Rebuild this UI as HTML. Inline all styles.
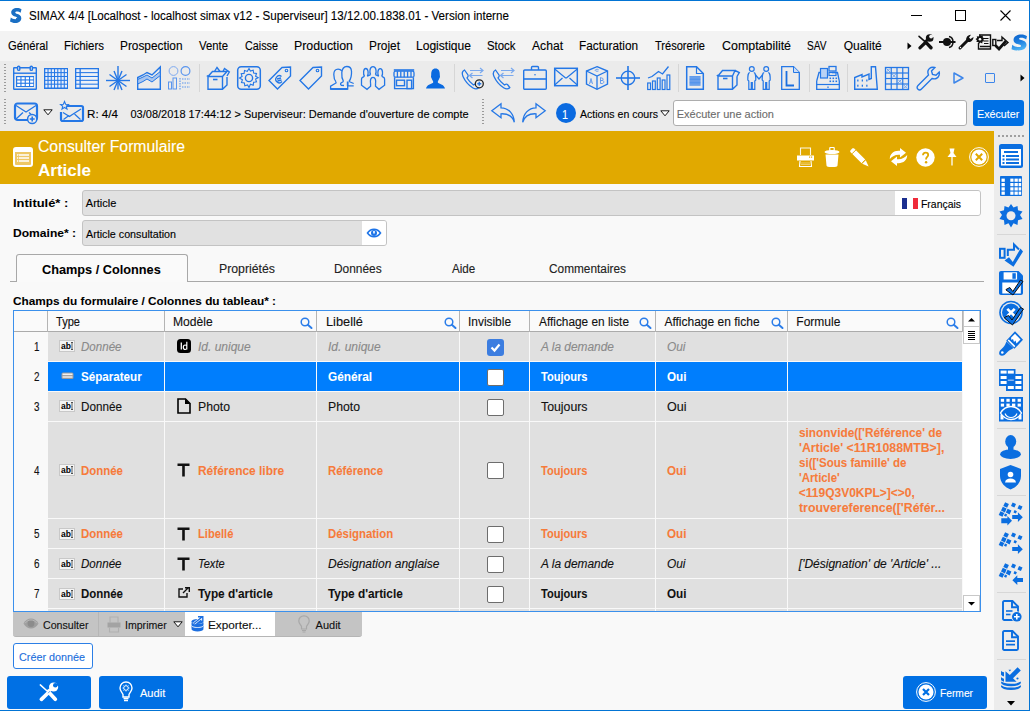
<!DOCTYPE html>
<html><head><meta charset="utf-8">
<style>
html,body{margin:0;padding:0;}
body{width:1030px;height:711px;position:relative;overflow:hidden;background:#f9f9f9;font-family:"Liberation Sans",sans-serif;color:#000;}
.t{position:absolute;white-space:nowrap;transform-origin:0 0;-webkit-text-stroke:0.12px currentColor;}
.b{position:absolute;box-sizing:border-box;}
svg{position:absolute;overflow:visible;}
</style></head><body>
<div class="b" style="left:0;top:0;width:1030px;height:31px;background:#fff"></div>
<div class="b" style="left:0;top:31px;width:1030px;height:30px;background:#f3f3f3"></div>
<div class="b" style="left:0;top:61px;width:1030px;height:70px;background:#ebebeb"></div>
<div class="b" style="left:0;top:131px;width:994px;height:53px;background:#e1a900"></div>
<div class="b" style="left:994px;top:131px;width:35px;height:580px;background:#ececec"></div>
<div class="t" style="left:29px;top:9.84px;font-size:12px;line-height:12px;transform:scaleX(0.967);">SIMAX 4/4 [Localhost - localhost simax v12 - Superviseur] 13/12.00.1838.01 - Version interne</div>
<div class="b" style="left:911px;top:15px;width:11px;height:1px;background:#000"></div>
<div class="b" style="left:955px;top:10px;width:11px;height:11px;border:1px solid #000"></div>
<svg style="left:1000px;top:10px" width="11" height="11"><path d="M0.5 0.5L10.5 10.5M10.5 0.5L0.5 10.5" stroke="#000" stroke-width="1.1"/></svg>
<div class="t" style="left:8.2px;top:39.84px;font-size:12px;line-height:12px;transform:scaleX(0.937);">Général</div>
<div class="t" style="left:63.7px;top:39.84px;font-size:12px;line-height:12px;transform:scaleX(0.952);">Fichiers</div>
<div class="t" style="left:119.7px;top:39.84px;font-size:12px;line-height:12px;transform:scaleX(0.986);">Prospection</div>
<div class="t" style="left:198.7px;top:39.84px;font-size:12px;line-height:12px;transform:scaleX(0.945);">Vente</div>
<div class="t" style="left:244.7px;top:39.84px;font-size:12px;line-height:12px;transform:scaleX(0.900);">Caisse</div>
<div class="t" style="left:293.7px;top:39.84px;font-size:12px;line-height:12px;transform:scaleX(1.028);">Production</div>
<div class="t" style="left:368.7px;top:39.84px;font-size:12px;line-height:12px;transform:scaleX(0.989);">Projet</div>
<div class="t" style="left:415.7px;top:39.84px;font-size:12px;line-height:12px;transform:scaleX(1.005);">Logistique</div>
<div class="t" style="left:486.7px;top:39.84px;font-size:12px;line-height:12px;transform:scaleX(0.950);">Stock</div>
<div class="t" style="left:531.7px;top:39.84px;font-size:12px;line-height:12px;transform:scaleX(1.010);">Achat</div>
<div class="t" style="left:578.7px;top:39.84px;font-size:12px;line-height:12px;transform:scaleX(0.983);">Facturation</div>
<div class="t" style="left:654.7px;top:39.84px;font-size:12px;line-height:12px;transform:scaleX(0.922);">Trésorerie</div>
<div class="t" style="left:721.7px;top:39.84px;font-size:12px;line-height:12px;transform:scaleX(1.035);">Comptabilité</div>
<div class="t" style="left:806.7px;top:39.84px;font-size:12px;line-height:12px;transform:scaleX(0.843);">SAV</div>
<div class="t" style="left:843.7px;top:39.84px;font-size:12px;line-height:12px;">Qualité</div>
<div class="t" style="left:87px;top:109.29px;font-size:11px;line-height:11px;transform:scaleX(1.056);">R: 4/4</div>
<div class="t" style="left:130.5px;top:109.29px;font-size:11px;line-height:11px;">03/08/2018 17:44:12 &gt; Superviseur: Demande d&#x27;ouverture de compte</div>
<div class="t" style="left:580px;top:109.29px;font-size:11px;line-height:11px;transform:scaleX(0.959);">Actions en cours</div>
<div class="b" style="left:673px;top:100px;width:294px;height:26px;background:#fff;border:1px solid #adadad;border-radius:3px"></div>
<div class="t" style="left:676.7px;top:109.29px;font-size:11px;line-height:11px;color:#6d6d6d;">Exécuter une action</div>
<div class="b" style="left:973px;top:100px;width:51px;height:26px;background:#0070e4;border-radius:3px"></div>
<div class="t" style="left:976.7px;top:109.29px;font-size:11px;line-height:11px;color:#fff;transform:scaleX(0.972);">Exécuter</div>
<div class="t" style="left:38.3px;top:138.86px;font-size:16px;line-height:16px;color:#fff;transform:scaleX(0.984);">Consulter Formulaire</div>
<div class="t" style="left:38.3px;top:162.76px;font-size:16px;line-height:16px;font-weight:bold;-webkit-text-stroke:0.05px currentColor;color:#fff;transform:scaleX(1.064);">Article</div>
<div class="t" style="left:13px;top:198.29px;font-size:11px;line-height:11px;font-weight:bold;-webkit-text-stroke:0.05px currentColor;transform:scaleX(1.175);">Intitulé* :</div>
<div class="b" style="left:82px;top:190px;width:899px;height:26px;background:#e1e1e1;border:1px solid #c3c3c3;border-radius:3px"></div>
<div class="b" style="left:895px;top:191px;width:85px;height:24px;background:#fff;border-radius:0 2px 2px 0"></div>
<div class="t" style="left:85.8px;top:198.29px;font-size:11px;line-height:11px;">Article</div>
<div class="b" style="left:902px;top:198px;width:5px;height:11px;background:#1b2f8f"></div>
<div class="b" style="left:907px;top:198px;width:6px;height:11px;background:#fff"></div>
<div class="b" style="left:913px;top:198px;width:5px;height:11px;background:#ef2b3b"></div>
<div class="t" style="left:921.4px;top:199.29px;font-size:11px;line-height:11px;transform:scaleX(0.948);">Français</div>
<div class="t" style="left:13px;top:228.29px;font-size:11px;line-height:11px;font-weight:bold;-webkit-text-stroke:0.05px currentColor;transform:scaleX(1.097);">Domaine* :</div>
<div class="b" style="left:82px;top:220px;width:305px;height:26px;background:#e1e1e1;border:1px solid #c3c3c3;border-radius:3px"></div>
<div class="b" style="left:362px;top:221px;width:24px;height:24px;background:#fff;border-radius:0 2px 2px 0"></div>
<div class="t" style="left:85.8px;top:229.29px;font-size:11px;line-height:11px;transform:scaleX(0.975);">Article consultation</div>
<div class="b" style="left:10px;top:281px;width:974px;height:1px;background:#a8a8a8"></div>
<div class="b" style="left:16px;top:254px;width:172px;height:28px;background:#fafafa;border:1px solid #a8a8a8;border-bottom:none;border-radius:3px 3px 0 0"></div>
<div class="t" style="left:42.3px;top:264.44px;font-size:12px;line-height:12px;font-weight:bold;-webkit-text-stroke:0.05px currentColor;transform:scaleX(1.060);">Champs / Colonnes</div>
<div class="t" style="left:219px;top:263.04px;font-size:12px;line-height:12px;color:#222;transform:scaleX(1.024);">Propriétés</div>
<div class="t" style="left:334.3px;top:263.04px;font-size:12px;line-height:12px;color:#222;transform:scaleX(0.993);">Données</div>
<div class="t" style="left:452.3px;top:263.04px;font-size:12px;line-height:12px;color:#222;transform:scaleX(0.970);">Aide</div>
<div class="t" style="left:549px;top:263.04px;font-size:12px;line-height:12px;color:#222;transform:scaleX(0.987);">Commentaires</div>
<div class="t" style="left:13.1px;top:295.89px;font-size:11px;line-height:11px;font-weight:bold;-webkit-text-stroke:0.05px currentColor;transform:scaleX(1.073);">Champs du formulaire / Colonnes du tableau* :</div>
<div class="b" style="left:4px;top:64px;width:2px;height:28px;background:repeating-linear-gradient(#9a9a9a 0 1px, transparent 1px 3px)"></div>
<div class="b" style="left:4px;top:99px;width:2px;height:27px;background:repeating-linear-gradient(#9a9a9a 0 1px, transparent 1px 3px)"></div>
<div class="b" style="left:482px;top:99px;width:2px;height:27px;background:repeating-linear-gradient(#9a9a9a 0 1px, transparent 1px 3px)"></div>
<div class="b" style="left:199px;top:64px;width:1px;height:28px;background:#d6d6d6"></div>
<div class="b" style="left:454px;top:64px;width:1px;height:28px;background:#d6d6d6"></div>
<div class="b" style="left:678px;top:64px;width:1px;height:28px;background:#d6d6d6"></div>
<div class="b" style="left:809px;top:64px;width:1px;height:28px;background:#d6d6d6"></div>
<div class="b" style="left:847px;top:64px;width:1px;height:28px;background:#d6d6d6"></div>
<svg style="left:13px;top:66px" width="24" height="24" viewBox="0 0 24 24" fill="none" stroke="#2477e6" stroke-width="1.4"><rect x="0.7" y="1.8" width="22.6" height="21.5" rx="0.5"/><line x1="0.7" y1="7.2" x2="23.3" y2="7.2"/><rect x="4.6" y="0.2" width="2.2" height="4.2" rx="1" fill="#ebebeb"/><rect x="17.2" y="0.2" width="2.2" height="4.2" rx="1" fill="#ebebeb"/><rect x="3" y="10" width="18" height="11" fill="#2477e6" stroke="none"/><rect x="4.2" y="11.2" width="3.2" height="2.2" fill="#fff" stroke="none"/><rect x="4.2" y="14.5" width="3.2" height="2.2" fill="#fff" stroke="none"/><rect x="4.2" y="17.8" width="3.2" height="2.2" fill="#fff" stroke="none"/><rect x="8.5" y="11.2" width="3.2" height="2.2" fill="#fff" stroke="none"/><rect x="8.5" y="14.5" width="3.2" height="2.2" fill="#fff" stroke="none"/><rect x="8.5" y="17.8" width="3.2" height="2.2" fill="#fff" stroke="none"/><rect x="12.8" y="11.2" width="3.2" height="2.2" fill="#fff" stroke="none"/><rect x="12.8" y="14.5" width="3.2" height="2.2" fill="#fff" stroke="none"/><rect x="12.8" y="17.8" width="3.2" height="2.2" fill="#fff" stroke="none"/><rect x="17.1" y="11.2" width="3.2" height="2.2" fill="#fff" stroke="none"/><rect x="17.1" y="14.5" width="3.2" height="2.2" fill="#fff" stroke="none"/><rect x="17.1" y="17.8" width="3.2" height="2.2" fill="#fff" stroke="none"/></svg>
<svg style="left:44px;top:66px" width="24" height="24" viewBox="0 0 24 24" fill="none" stroke="#2477e6" stroke-width="1.4"><rect x="0" y="2" width="24" height="21" fill="#2477e6" stroke="none"/><rect x="1.3" y="3.3" width="2.2" height="2.8" fill="#e8eefa" stroke="none"/><rect x="1.3" y="7.1499999999999995" width="2.2" height="2.8" fill="#e8eefa" stroke="none"/><rect x="1.3" y="11.0" width="2.2" height="2.8" fill="#e8eefa" stroke="none"/><rect x="1.3" y="14.849999999999998" width="2.2" height="2.8" fill="#e8eefa" stroke="none"/><rect x="1.3" y="18.7" width="2.2" height="2.8" fill="#e8eefa" stroke="none"/><rect x="4.55" y="3.3" width="2.2" height="2.8" fill="#e8eefa" stroke="none"/><rect x="4.55" y="7.1499999999999995" width="2.2" height="2.8" fill="#e8eefa" stroke="none"/><rect x="4.55" y="11.0" width="2.2" height="2.8" fill="#e8eefa" stroke="none"/><rect x="4.55" y="14.849999999999998" width="2.2" height="2.8" fill="#e8eefa" stroke="none"/><rect x="4.55" y="18.7" width="2.2" height="2.8" fill="#e8eefa" stroke="none"/><rect x="7.8" y="3.3" width="2.2" height="2.8" fill="#e8eefa" stroke="none"/><rect x="7.8" y="7.1499999999999995" width="2.2" height="2.8" fill="#e8eefa" stroke="none"/><rect x="7.8" y="11.0" width="2.2" height="2.8" fill="#e8eefa" stroke="none"/><rect x="7.8" y="14.849999999999998" width="2.2" height="2.8" fill="#e8eefa" stroke="none"/><rect x="7.8" y="18.7" width="2.2" height="2.8" fill="#e8eefa" stroke="none"/><rect x="11.05" y="3.3" width="2.2" height="2.8" fill="#e8eefa" stroke="none"/><rect x="11.05" y="7.1499999999999995" width="2.2" height="2.8" fill="#e8eefa" stroke="none"/><rect x="11.05" y="11.0" width="2.2" height="2.8" fill="#e8eefa" stroke="none"/><rect x="11.05" y="14.849999999999998" width="2.2" height="2.8" fill="#e8eefa" stroke="none"/><rect x="11.05" y="18.7" width="2.2" height="2.8" fill="#e8eefa" stroke="none"/><rect x="14.3" y="3.3" width="2.2" height="2.8" fill="#e8eefa" stroke="none"/><rect x="14.3" y="7.1499999999999995" width="2.2" height="2.8" fill="#e8eefa" stroke="none"/><rect x="14.3" y="11.0" width="2.2" height="2.8" fill="#e8eefa" stroke="none"/><rect x="14.3" y="14.849999999999998" width="2.2" height="2.8" fill="#e8eefa" stroke="none"/><rect x="14.3" y="18.7" width="2.2" height="2.8" fill="#e8eefa" stroke="none"/><rect x="17.55" y="3.3" width="2.2" height="2.8" fill="#e8eefa" stroke="none"/><rect x="17.55" y="7.1499999999999995" width="2.2" height="2.8" fill="#e8eefa" stroke="none"/><rect x="17.55" y="11.0" width="2.2" height="2.8" fill="#e8eefa" stroke="none"/><rect x="17.55" y="14.849999999999998" width="2.2" height="2.8" fill="#e8eefa" stroke="none"/><rect x="17.55" y="18.7" width="2.2" height="2.8" fill="#e8eefa" stroke="none"/><rect x="20.8" y="3.3" width="2.2" height="2.8" fill="#e8eefa" stroke="none"/><rect x="20.8" y="7.1499999999999995" width="2.2" height="2.8" fill="#e8eefa" stroke="none"/><rect x="20.8" y="11.0" width="2.2" height="2.8" fill="#e8eefa" stroke="none"/><rect x="20.8" y="14.849999999999998" width="2.2" height="2.8" fill="#e8eefa" stroke="none"/><rect x="20.8" y="18.7" width="2.2" height="2.8" fill="#e8eefa" stroke="none"/></svg>
<svg style="left:75px;top:66px" width="24" height="24" viewBox="0 0 24 24" fill="none" stroke="#2477e6" stroke-width="1.4"><rect x="0" y="2" width="24" height="21" fill="#2477e6" stroke="none"/><rect x="1.3" y="3.3" width="3.2" height="2.8" fill="#e8eefa" stroke="none"/><rect x="1.3" y="7.1499999999999995" width="3.2" height="2.8" fill="#e8eefa" stroke="none"/><rect x="1.3" y="11.0" width="3.2" height="2.8" fill="#e8eefa" stroke="none"/><rect x="1.3" y="14.849999999999998" width="3.2" height="2.8" fill="#e8eefa" stroke="none"/><rect x="1.3" y="18.7" width="3.2" height="2.8" fill="#e8eefa" stroke="none"/><rect x="5.8" y="3.3" width="16.9" height="2.8" fill="#eef1f6" stroke="none"/><rect x="5.8" y="7.15" width="16.9" height="2.8" fill="#eef1f6" stroke="none"/><rect x="5.8" y="11.0" width="16.9" height="2.8" fill="#eef1f6" stroke="none"/><rect x="5.8" y="14.850000000000001" width="16.9" height="2.8" fill="#eef1f6" stroke="none"/><rect x="5.8" y="18.7" width="16.9" height="2.8" fill="#eef1f6" stroke="none"/></svg>
<svg style="left:106px;top:66px" width="24" height="24" viewBox="0 0 24 24" fill="none" stroke="#2477e6" stroke-width="1.4"><line x1="12" y1="0" x2="12" y2="23.5"/><line x1="0" y1="14.5" x2="24" y2="14.5"/><line x1="3.5" y1="8.5" x2="20.5" y2="20.5"/><line x1="20.5" y1="8.5" x2="3.5" y2="20.5"/><line x1="8" y1="5" x2="16" y2="24"/><line x1="16" y1="5" x2="8" y2="24"/><circle cx="12" cy="14.5" r="1.3" fill="#2477e6"/></svg>
<svg style="left:137px;top:66px" width="24" height="24" viewBox="0 0 24 24" fill="none" stroke="#2477e6" stroke-width="1.4"><path d="M0.7 23.3V11.5L6 9L10 6.5L15 9L23.3 1V23.3Z"/><path d="M0.7 13.5L6 11L10 9L15 12L23.3 5.5V9.5L15 16L10 13L6 15.5L0.7 18Z" fill="#a9c6ef" stroke-width="1"/></svg>
<svg style="left:168px;top:66px" width="24" height="24" viewBox="0 0 24 24" fill="none" stroke="#2477e6" stroke-width="1.4"><circle cx="5.5" cy="5" r="4.4" stroke="#7eaaf0" stroke-width="1"/><circle cx="17.5" cy="5" r="4.4" stroke="#5a95ee" stroke-width="1.2"/><rect x="0.5" y="16" width="3" height="7" stroke="#5a95ee" stroke-width="1"/><rect x="5" y="12" width="3.5" height="11" stroke="#5a95ee" stroke-width="1"/><path d="M12 12V23.5M14 13h8M14 17h8M14 21h8" stroke="#5a95ee" stroke-width="1.1" stroke-dasharray="1.5 1"/></svg>
<svg style="left:206px;top:66px" width="24" height="24" viewBox="0 0 24 24" fill="none" stroke="#2477e6" stroke-width="1.4"><path d="M2 10.5V23.3H16.5L21 19V11M2 10.5H16.5V23.3M2 10.5L6.5 5.5H21L16.5 10.5" /><path d="M8.5 5.5L11 1.5L14 5.5M17 5.5L18.5 2.5L23.3 6L21 10" /><line x1="7" y1="13.5" x2="11.5" y2="13.5" stroke-width="1.6"/><path d="M0.8 10.5L2 9.5" /></svg>
<svg style="left:237px;top:66px" width="24" height="24" viewBox="0 0 24 24" fill="none" stroke="#2477e6" stroke-width="1.4"><rect x="0.7" y="0.7" width="22.6" height="22.6" rx="3.5" stroke-width="1.5"/><path d="M12 2.5l1.4 2.6 2.8-.9.4 2.9 2.9.4-.9 2.8 2.6 1.4-2.6 1.4.9 2.8-2.9.4-.4 2.9-2.8-.9L12 21.5l-1.4-2.6-2.8.9-.4-2.9-2.9-.4.9-2.8L2.5 12l2.6-1.4-.9-2.8 2.9-.4.4-2.9 2.8.9Z" stroke-width="1.1"/><circle cx="12" cy="12" r="3.6" stroke-width="1.4"/></svg>
<svg style="left:268px;top:66px" width="24" height="24" viewBox="0 0 24 24" fill="none" stroke="#2477e6" stroke-width="1.4"><path d="M22.5 1V10L9.5 23L1 14.5L14 1.5Z" stroke-width="1.4"/><circle cx="18.5" cy="4.5" r="1.3" stroke-width="1.1"/><path d="M13.5 10.5a3.5 3.5 0 1 0 0.5 5M9 13l4-1M9.5 15l4-1" stroke-width="1.3"/></svg>
<svg style="left:299px;top:66px" width="24" height="24" viewBox="0 0 24 24" fill="none" stroke="#2477e6" stroke-width="1.4"><path d="M22.5 1V10L9.5 23L1 14.5L14 1.5Z" stroke-width="1.4"/><circle cx="18.5" cy="4.5" r="1.3" stroke-width="1.1"/></svg>
<svg style="left:330px;top:66px" width="24" height="24" viewBox="0 0 24 24" fill="none" stroke="#2477e6" stroke-width="1.4"><path d="M6 15.9C4.5 14 3.8 11 3.8 8.4C3.8 5 5.5 3.1 8.1 3.1C9.8 3.1 11 3.8 11.8 5" stroke-width="1.3"/><path d="M6 15.9V17L0.6 20.2V23H17.7V20" stroke-width="1.3"/><path d="M0.6 23H17.7" stroke-width="1.8"/><path d="M13.5 15.5C12 13 11.6 9 11.8 6.6C12.2 2.2 14 0.5 16.8 0.5C19.6 0.5 21.3 2.2 21.5 5.3C21.7 9 20.8 13 19 15.5" stroke-width="1.3"/><path d="M13.5 15.5L11 17C10.3 17.8 10.5 18.8 11.5 19.3L14 19.5M19 15.5L23.7 17.5M17.7 19.8H23.7" stroke-width="1.3"/><path d="M17.7 15.5V20" stroke-width="1.8"/></svg>
<svg style="left:361px;top:66px" width="24" height="24" viewBox="0 0 24 24" fill="none" stroke="#2477e6" stroke-width="1.4"><path d="M3.5 10.2C2.2 8.5 2 2.5 4.8 2.5C7.6 2.5 7.6 8.5 6.3 10.2" stroke-width="1.3"/><path d="M9.6 8.6C8.4 6.5 8.5 0.6 12 0.6C15.5 0.6 15.6 6.5 14.4 8.6" stroke-width="1.3"/><path d="M17.7 10.2C16.4 8.5 16.4 2.7 19.2 2.7C22 2.7 22 8.5 20.7 10.2" stroke-width="1.3"/><path d="M3.5 10.2L1.2 11.6C0.6 12 0.5 12.8 0.5 13.6V19.2L6 23.3L9.6 20.2V17.8" stroke-width="1.3"/><path d="M20.7 10.2L23 11.6C23.6 12 23.6 12.8 23.6 13.6V19.2L18 23.3L14.5 20.2V17.8" stroke-width="1.3"/><path d="M9.6 17.8C9 14.5 9.6 11.3 12 11.3C14.4 11.3 15.1 14.5 14.5 17.8" stroke-width="1.3"/><path d="M6.3 10.2L9.6 8.6M14.4 8.6L17.7 10.2" stroke-width="1.3"/></svg>
<svg style="left:392px;top:66px" width="24" height="24" viewBox="0 0 24 24" fill="none" stroke="#2477e6" stroke-width="1.4"><path d="M1.8 4H22.2" stroke-width="1.6"/><rect x="2" y="5.2" width="20" height="6" rx="1.5" stroke-width="1.3"/><path d="M5.4 5.2V11.2M8.8 5.2V11.2M12.2 5.2V11.2M15.6 5.2V11.2M19 5.2V11.2" stroke-width="1.3"/><path d="M2.6 11.2V22.6H21.4V11.2" stroke-width="1.4"/><rect x="4.5" y="14.2" width="8" height="5.5" stroke-width="1.4"/><rect x="15" y="14.2" width="4.6" height="8.4" stroke-width="1.4"/></svg>
<svg style="left:426px;top:67.5px" width="19" height="21" viewBox="0 0 20 22"><path d="M10 0.5C6.8 0.5 5.5 3 5.5 6.5C5.5 8.5 5 9 5.5 10C6 11 6.5 12.5 7.5 14V15.5C5 17 1 17.5 0 21.5H20C19 17.5 15 17 12.5 15.5V14C13.5 12.5 14 11 14.5 10C15 9 14.5 8.5 14.5 6.5C14.5 3 13.2 0.5 10 0.5Z" fill="#0a6ae0"/></svg>
<svg style="left:461px;top:66px" width="24" height="24" viewBox="0 0 24 24" fill="none" stroke="#2477e6" stroke-width="1.4"><path d="M3.5 4C1.5 5 0.5 7 2 10.5C4 15 8 19.5 12 22C14.5 23.5 16.5 23 17.8 21.5L15.5 18.5C14.5 17.8 13.5 18.3 12.5 19C10.5 17.5 7.5 14.5 6 12C7 11 7.5 10 7 9Z" stroke-width="1.3"/><path d="M9 4.5H22M19 2L22 4.5L19 7M21.5 9.5H8.5M11.5 7L8.5 9.5L11.5 12" stroke="#7aa9ee" stroke-width="1.2"/><circle cx="18.3" cy="17.8" r="4" stroke="#222" stroke-width="1.3" fill="#ebebeb"/><path d="M18.3 15.8V19.8M16.3 17.8H20.3" stroke-width="1.5"/></svg>
<svg style="left:492px;top:66px" width="24" height="24" viewBox="0 0 24 24" fill="none" stroke="#2477e6" stroke-width="1.4"><path d="M3.5 4C1.5 5 0.5 7 2 10.5C4 15 8 19.5 12 22C14.5 23.5 16.5 23 17.8 21.5L15.5 18.5C14.5 17.8 13.5 18.3 12.5 19C10.5 17.5 7.5 14.5 6 12C7 11 7.5 10 7 9Z" stroke-width="1.3"/><path d="M9 4.5H22M19 2L22 4.5L19 7M21.5 9.5H8.5M11.5 7L8.5 9.5L11.5 12" stroke="#7aa9ee" stroke-width="1.2"/></svg>
<svg style="left:523px;top:66px" width="24" height="24" viewBox="0 0 24 24" fill="none" stroke="#2477e6" stroke-width="1.4"><rect x="0.7" y="4" width="22.6" height="19.3" rx="1"/><path d="M8.5 4V1.5C8.5 0.9 9 0.5 9.5 0.5H14.5C15 0.5 15.5 0.9 15.5 1.5V4"/><line x1="0.7" y1="13" x2="23.3" y2="13" stroke-width="1.6"/><circle cx="12" cy="8.8" r="0.8" fill="#2477e6" stroke="none"/></svg>
<svg style="left:554px;top:66px" width="24" height="24" viewBox="0 0 24 24" fill="none" stroke="#2477e6" stroke-width="1.4"><rect x="0.7" y="2.3" width="22.6" height="17.4" stroke-width="1.5"/><path d="M0.7 3L11 11.5C11.6 12 12.4 12 13 11.5L23.3 3M0.7 19L8.5 12M23.3 19L15.5 12" stroke-width="1.2"/></svg>
<svg style="left:585px;top:66px" width="24" height="24" viewBox="0 0 24 24" fill="none" stroke="#2477e6" stroke-width="1.4"><path d="M12 0.7L22.5 5V18L12 23.3L1.5 18V5Z" stroke-width="1.4"/><path d="M1.5 5L12 10L22.5 5M12 10V23.3" stroke-width="1.3"/><path d="M4.5 18L6 12.5L7.5 18M5 16h2" stroke="#5d97ec" stroke-width="0.9"/><path d="M15.5 11.5v6h1.7c1 0 1.6-.6 1.6-1.6 0-.9-.6-1.4-1.6-1.4h-1.7 1.4c.8 0 1.3-.5 1.3-1.3 0-.7-.5-1.1-1.3-1.1Z" stroke="#5d97ec" stroke-width="0.9"/><path d="M13.5 3.5a2 1 0 1 0 0 1.5" stroke="#5d97ec" stroke-width="0.9"/></svg>
<svg style="left:616px;top:66px" width="24" height="24" viewBox="0 0 24 24" fill="none" stroke="#2477e6" stroke-width="1.4"><circle cx="12" cy="12" r="6.8" stroke-width="1.3"/><line x1="12" y1="0" x2="12" y2="24" stroke-width="1.6"/><line x1="0" y1="12" x2="24" y2="12" stroke-width="1.6"/></svg>
<svg style="left:647px;top:66px" width="24" height="24" viewBox="0 0 24 24" fill="none" stroke="#2477e6" stroke-width="1.4"><rect x="0.7" y="17" width="2.8" height="6.5" stroke-width="1.2"/><rect x="5.5" y="15" width="2.8" height="8.5" stroke-width="1.2"/><rect x="10.3" y="12" width="2.8" height="11.5" stroke-width="1.2"/><rect x="15.2" y="14" width="2.8" height="9.5" stroke-width="1.2"/><rect x="20" y="9" width="2.8" height="14.5" stroke-width="1.2"/><path d="M1 12L5 10.5L11.5 5.5L15.5 8L21.5 0.5" stroke-width="1.3"/></svg>
<svg style="left:686px;top:66px" width="18" height="24" viewBox="0 0 18 24" fill="none" stroke="#2477e6" stroke-width="1.4"><path d="M0.7 0.7H10.5L17.3 7.5V23.3H0.7Z" stroke-width="1.5"/><path d="M10.5 0.7V7.5H17.3" stroke-width="1.2"/><rect x="3.5" y="10" width="11" height="9.5" fill="#8fb6f0" stroke="none"/><line x1="3.5" y1="10.8" x2="14.5" y2="10.8" stroke="#2477e6" stroke-width="0.6"/><line x1="3.5" y1="12.200000000000001" x2="14.5" y2="12.200000000000001" stroke="#2477e6" stroke-width="0.6"/><line x1="3.5" y1="13.600000000000001" x2="14.5" y2="13.600000000000001" stroke="#2477e6" stroke-width="0.6"/><line x1="3.5" y1="15.0" x2="14.5" y2="15.0" stroke="#2477e6" stroke-width="0.6"/><line x1="3.5" y1="16.4" x2="14.5" y2="16.4" stroke="#2477e6" stroke-width="0.6"/><line x1="3.5" y1="17.8" x2="14.5" y2="17.8" stroke="#2477e6" stroke-width="0.6"/><line x1="3.5" y1="19.2" x2="14.5" y2="19.2" stroke="#2477e6" stroke-width="0.6"/></svg>
<svg style="left:716px;top:66px" width="24" height="24" viewBox="0 0 24 24" fill="none" stroke="#2477e6" stroke-width="1.4"><path d="M2 10V23.3H16.5L21 19V10.5M2 10H16.5V23.3M2 10L6.5 4.5H19L16.5 10M19 4.5L23.3 6.5L21 10.5" /><line x1="7" y1="12.5" x2="11.5" y2="12.5" stroke-width="1.6"/><path d="M0.8 10L2 9" /></svg>
<svg style="left:747px;top:66px" width="24" height="24" viewBox="0 0 24 24" fill="none" stroke="#2477e6" stroke-width="1.4"><circle cx="4.8" cy="3" r="2.4" stroke-width="1.2"/><path d="M2.8 6.5C0.7999999999999998 7 0.7999999999999998 9 0.7999999999999998 14L1.7999999999999998 15V23.3H4.3V16M6.8 6.5C8.8 7 8.8 9 8.8 14L7.8 15V23.3H5.3V16" stroke-width="1.2"/><circle cx="19.2" cy="3" r="2.4" stroke-width="1.2"/><path d="M17.2 6.5C15.2 7 15.2 9 15.2 14L16.2 15V23.3H18.7V16M21.2 6.5C23.2 7 23.2 9 23.2 14L22.2 15V23.3H19.7V16" stroke-width="1.2"/><path d="M8.5 9L12 13L15.5 9" stroke-width="1.3"/></svg>
<svg style="left:781px;top:66px" width="19" height="24" viewBox="0 0 19 24" fill="none" stroke="#2477e6" stroke-width="1.4"><path d="M0.7 0.7H12.5L18.3 6.5V23.3H0.7Z" stroke-width="1.3"/><path d="M12.5 0.7V6.5H18.3" stroke-width="1" fill="#c9dcf7"/><path d="M5.5 5V19.5H13" stroke="#1a6fe0" stroke-width="1.8"/></svg>
<svg style="left:816px;top:66px" width="24" height="24" viewBox="0 0 24 24" fill="none" stroke="#2477e6" stroke-width="1.4"><path d="M0.7 15V23.3H23.3V15L21.5 6.5H16M0.7 15L3 6.5H5" stroke-width="1.3"/><line x1="0.7" y1="18.5" x2="23.3" y2="18.5" stroke-width="1.2"/><rect x="4.5" y="2.5" width="7" height="9.5" fill="#b9d2f5" stroke-width="1.2"/><rect x="13" y="0.5" width="7" height="4.5" stroke-width="1.3"/><rect x="13" y="6.5" width="7" height="3" stroke-width="1.2"/><rect x="13.5" y="11.5" width="1.6" height="1.6" fill="#2477e6" stroke="none"/><rect x="13.5" y="14.5" width="1.6" height="1.6" fill="#2477e6" stroke="none"/><rect x="16.5" y="11.5" width="1.6" height="1.6" fill="#2477e6" stroke="none"/><rect x="16.5" y="14.5" width="1.6" height="1.6" fill="#2477e6" stroke="none"/><rect x="19.5" y="11.5" width="1.6" height="1.6" fill="#2477e6" stroke="none"/><rect x="19.5" y="14.5" width="1.6" height="1.6" fill="#2477e6" stroke="none"/><rect x="11.3" y="20.5" width="1.4" height="1.4" fill="#2477e6" stroke="none"/></svg>
<svg style="left:854px;top:66px" width="24" height="24" viewBox="0 0 24 24" fill="none" stroke="#2477e6" stroke-width="1.4"><path d="M0.7 23.3V11.5L8 8.5V11L15 8V13.5L17.3 12.5V0.7H21.5L23.3 23.3Z" stroke-width="1.4"/><rect x="3.2" y="13.5" width="1.3" height="2" fill="#2477e6" stroke="none"/><rect x="3.2" y="18.7" width="1.3" height="2" fill="#2477e6" stroke="none"/><rect x="7.7" y="13.5" width="1.3" height="2" fill="#2477e6" stroke="none"/><rect x="7.7" y="18.7" width="1.3" height="2" fill="#2477e6" stroke="none"/><rect x="12.2" y="13.5" width="1.3" height="2" fill="#2477e6" stroke="none"/><rect x="12.2" y="18.7" width="1.3" height="2" fill="#2477e6" stroke="none"/></svg>
<svg style="left:885px;top:66px" width="24" height="24" viewBox="0 0 24 24" fill="none" stroke="#2477e6" stroke-width="1.4"><rect x="0.5" y="1.5" width="23" height="22" stroke-width="1.3"/><line x1="6.25" y1="1.5" x2="6.25" y2="23.5" stroke-width="1.2"/><line x1="0.5" y1="7.0" x2="23.5" y2="7.0" stroke-width="1.2"/><line x1="12.0" y1="1.5" x2="12.0" y2="23.5" stroke-width="1.2"/><line x1="0.5" y1="12.5" x2="23.5" y2="12.5" stroke-width="1.2"/><line x1="17.75" y1="1.5" x2="17.75" y2="23.5" stroke-width="1.2"/><line x1="0.5" y1="18.0" x2="23.5" y2="18.0" stroke-width="1.2"/><path d="M1.5 2.5l3.5 3.5M5.0 2.5l-3.5 3.5" stroke="#6ea3ee" stroke-width="1"/><path d="M7.25 8.0l3.5 3.5M10.75 8.0l-3.5 3.5" stroke="#6ea3ee" stroke-width="1"/><path d="M13.0 13.5l3.5 3.5M16.5 13.5l-3.5 3.5" stroke="#6ea3ee" stroke-width="1"/><path d="M18.75 19.0l3.5 3.5M22.25 19.0l-3.5 3.5" stroke="#6ea3ee" stroke-width="1"/></svg>
<svg style="left:916px;top:66px" width="24" height="24" viewBox="0 0 24 24" fill="none" stroke="#2477e6" stroke-width="1.4"><path d="M12.5 9L2 19.5C0.8 20.7 0.8 22.3 2 23.3C3 24.2 4.5 24 5.5 23L16 12.5C19 13.5 22 12.5 23 9.5C23.5 8 23.5 7 23.2 6L20 9.2L16.5 8.5L15.5 5L18.8 1.5C17 1 15 1.2 13.5 2.5C11.7 4 11.5 6.5 12.5 9Z" stroke-width="1.4"/></svg>
<svg style="left:953px;top:72px" width="11" height="12" viewBox="0 0 11 12"><path d="M1 1V11L10 6Z" fill="none" stroke="#3d86ea" stroke-width="1.5" stroke-linejoin="round"/></svg>
<div class="b" style="left:985px;top:73px;width:10px;height:10px;border:1.5px solid #3d86ea;border-radius:1px"></div>
<svg style="left:1020px;top:74px" width="5" height="8"><path d="M0.5 0.5V7.5L4.5 4Z" fill="#000"/></svg>
<svg style="left:907px;top:42px" width="5" height="8"><path d="M0.5 0.5V7.5L4.5 4Z" fill="#000"/></svg>
<svg style="left:14px;top:102px" width="24" height="23" viewBox="0 0 24 23" fill="none" stroke="#2477e6" stroke-width="1.4"><rect x="1" y="1.5" width="22" height="16.5" rx="2.5" stroke-width="2.2"/><path d="M2 3.5L12 10L22 3.5M2 17L9 10.5M22 17L15 10.5" stroke-width="1.3"/><circle cx="18.2" cy="17" r="4.6" fill="#ebebeb" stroke-width="1.5"/><path d="M18.2 14.5V19.5M15.7 17H20.7" stroke-width="1.6"/></svg>
<svg style="left:43px;top:109px" width="10" height="7" viewBox="0 0 10 7"><path d="M0.8 0.8H9.2L5 5.8Z" fill="#fff" stroke="#000" stroke-width="0.9" stroke-linejoin="miter"/></svg>
<svg style="left:60px;top:101px" width="24" height="21" viewBox="0 0 24 21" fill="none" stroke="#2477e6" stroke-width="1.4"><path d="M6 5H21.3C22.3 5 23 5.7 23 6.7V18.3C23 19.3 22.3 20 21.3 20H2.7C1.7 20 1 19.3 1 18.3V11" stroke-width="2.2"/><path d="M3 11.5L9.5 15.5L12 13.8L21 8" stroke-width="1.3"/><path d="M3.5 18.5L9 14.5M20.5 18.5L14.5 13" stroke-width="1.2"/><path d="M4.5 0.5L5.6 3.2L8.5 3.4L6.3 5.3L7 8L4.5 6.5L2 8L2.7 5.3L0.5 3.4L3.4 3.2Z" stroke-width="1.1" fill="#ebebeb"/></svg>
<svg style="left:491px;top:103px" width="24" height="20" viewBox="0 0 24 20" fill="none" stroke="#2477e6" stroke-width="1.3"><path d="M10 0.7L0.8 7.8L10 14.8V10.8C16.5 10.5 21.5 13 23.3 19.3C23 11 17.5 4.8 10 4.8Z" stroke-width="1.3" stroke-linejoin="miter"/></svg>
<svg style="left:522px;top:103px" width="24" height="20" viewBox="0 0 24 20" fill="none" stroke="#2477e6" stroke-width="1.3"><g transform="translate(24 0) scale(-1 1)"><path d="M10 0.7L0.8 7.8L10 14.8V10.8C16.5 10.5 21.5 13 23.3 19.3C23 11 17.5 4.8 10 4.8Z" stroke-width="1.3" stroke-linejoin="miter"/></g></svg>
<div class="b" style="left:556px;top:103px;width:20px;height:20px;border-radius:50%;background:#0a6ae0"></div>
<div class="t" style="left:562.3px;top:108.54px;font-size:12px;line-height:12px;color:#fff;transform:scaleX(0.899);">1</div>
<svg style="left:660px;top:110px" width="10" height="7" viewBox="0 0 10 7"><path d="M0.8 0.8H9.2L5 5.8Z" fill="#fff" stroke="#000" stroke-width="0.9" stroke-linejoin="miter"/></svg>
<svg style="left:13px;top:147px" width="20" height="20" viewBox="0 0 20 20"><rect x="1" y="1" width="18" height="18" rx="2" fill="#eec765" stroke="#fff" stroke-width="2"/><rect x="1" y="1" width="18" height="4" fill="#fff"/><path d="M4 8H16M4 11H16M4 14H16" stroke="#fff" stroke-width="1.3"/><path d="M5.5 7.5V15" stroke="#eec765" stroke-width="0.8"/></svg>
<svg style="left:797px;top:147px" width="17" height="20" viewBox="0 0 17 20"><path d="M3.5 8V1H13.5V8" fill="none" stroke="#fff" stroke-width="1.1" opacity="0.9"/><path d="M0 8.5H17V13.5H0Z" fill="#fff"/><rect x="12" y="9.5" width="1.2" height="1.2" fill="#e1a900"/><rect x="14" y="9.5" width="1.2" height="1.2" fill="#e1a900"/><path d="M3 14L2.5 19.5H14.5L14 14" fill="none" stroke="#fff" stroke-width="1.1"/><path d="M4 16H13M4 17.5H13" stroke="#f5dc95" stroke-width="0.7"/></svg>
<svg style="left:824px;top:147px" width="16" height="20" viewBox="0 0 16 20"><rect x="5.8" y="0.5" width="4.4" height="3.5" rx="0.5" fill="none" stroke="#fff" stroke-width="1.2"/><ellipse cx="8" cy="5" rx="7.5" ry="2" fill="#fff"/><path d="M1.5 7.5H14.5L13.5 18.5C13.3 19.5 12 20 8 20C4 20 2.7 19.5 2.5 18.5Z" fill="#fff"/></svg>
<svg style="left:850px;top:148px" width="19" height="19" viewBox="0 0 19 19"><path d="M2.2 0.6C2.8 0 3.6 0 4.2 0.6L15.2 11.6L11.6 15.2L0.6 4.2C0 3.6 0 2.8 0.6 2.2Z" fill="#fff"/><path d="M15.8 12.2L18.6 18.6L12.2 15.8Z" fill="#fff"/><path d="M2 5.8L5.8 2" stroke="#e1a900" stroke-width="1"/><path d="M12.4 14.6L14.6 12.4" stroke="#e1a900" stroke-width="0.8"/></svg>
<svg style="left:889px;top:148px" width="19" height="18" viewBox="0 0 19 18"><path d="M0.8 11C0.8 6 4.5 2.8 9.5 2.8H11V0L17 4.8L11 9.6V6.8H9.5C6 6.8 3 8.5 0.8 11Z" fill="#fff"/><path d="M18.2 7C18.2 12 14.5 15.2 9.5 15.2H8V18L2 13.2L8 8.4V11.2H9.5C13 11.2 16 9.5 18.2 7Z" fill="#fff"/></svg>
<svg style="left:916px;top:147.5px" width="19" height="19" viewBox="0 0 19 19"><circle cx="9.5" cy="9.5" r="9.2" fill="#fff"/><path d="M7 7.3C7 5.6 8.1 4.7 9.6 4.7C11.1 4.7 12.2 5.6 12.2 7C12.2 8.8 10.1 9 10.1 11V11.6" fill="none" stroke="#e1a900" stroke-width="1.8"/><circle cx="10.1" cy="14.2" r="1.2" fill="#e1a900"/></svg>
<svg style="left:947px;top:148px" width="10" height="18" viewBox="0 0 10 18"><path d="M2.5 0.5H7.5L6.5 5L9.5 9H0.5L3.5 5Z" fill="#fff"/><path d="M5 9V17.5" stroke="#fff" stroke-width="1.3"/></svg>
<svg style="left:969px;top:147px" width="20" height="20" viewBox="0 0 20 20"><circle cx="10" cy="10" r="9.4" fill="none" stroke="#fff" stroke-width="1"/><circle cx="10" cy="10" r="7.6" fill="#fff"/><path d="M6.8 6.8L13.2 13.2M13.2 6.8L6.8 13.2" stroke="#e1a900" stroke-width="2"/></svg>
<div class="b" style="left:998px;top:135px;width:27px;height:2px;background:repeating-linear-gradient(90deg,#9f9f9f 0 2px,transparent 2px 4px)"></div>
<div class="b" style="left:997px;top:234px;width:29px;height:1px;background:#d7d7d7"></div>
<div class="b" style="left:997px;top:361px;width:29px;height:1px;background:#d7d7d7"></div>
<div class="b" style="left:997px;top:428px;width:29px;height:1px;background:#d7d7d7"></div>
<div class="b" style="left:997px;top:495px;width:29px;height:1px;background:#d7d7d7"></div>
<div class="b" style="left:997px;top:592px;width:29px;height:1px;background:#d7d7d7"></div>
<div class="b" style="left:997px;top:659px;width:29px;height:1px;background:#d7d7d7"></div>
<svg style="left:999px;top:144px" width="24" height="24" viewBox="0 0 24 24" fill="#0b6ee0" stroke="none"><rect x="0" y="0" width="24" height="24" rx="2.5"/><rect x="2" y="5" width="20" height="16.5" fill="#fff"/><rect x="5" y="2" width="14" height="1.2" fill="#fff" opacity="0"/><rect x="5" y="7" width="14" height="2"/><rect x="3.5" y="11" width="2" height="2"/><rect x="7" y="11" width="13" height="2"/><rect x="3.5" y="14.5" width="2" height="2"/><rect x="7" y="14.5" width="13" height="2"/><rect x="3.5" y="18" width="2" height="2"/><rect x="7" y="18" width="13" height="2"/></svg>
<svg style="left:1000px;top:176px" width="22" height="20" viewBox="0 0 22 20" fill="#0b6ee0" stroke="none"><rect x="0" y="0" width="22" height="20" rx="0.8"/><rect x="1.5" y="2.6" width="3.3" height="3.2" fill="#fff"/><rect x="1.5" y="7" width="3.3" height="3.2" fill="#fff"/><rect x="1.5" y="11.3" width="3.3" height="3.2" fill="#fff"/><rect x="1.5" y="15.6" width="3.3" height="3.2" fill="#fff"/><rect x="10.3" y="2.6" width="3.2" height="3.2" fill="#fff"/><rect x="10.3" y="7" width="3.2" height="3.2" fill="#fff"/><rect x="10.3" y="11.3" width="3.2" height="3.2" fill="#fff"/><rect x="10.3" y="15.6" width="3.2" height="3.2" fill="#fff"/><rect x="14.5" y="2.6" width="3.3" height="3.2" fill="#fff"/><rect x="14.5" y="7" width="3.3" height="3.2" fill="#fff"/><rect x="14.5" y="11.3" width="3.3" height="3.2" fill="#fff"/><rect x="14.5" y="15.6" width="3.3" height="3.2" fill="#fff"/><rect x="18.6" y="2.6" width="2.6" height="3.2" fill="#fff"/><rect x="18.6" y="7" width="2.6" height="3.2" fill="#fff"/><rect x="18.6" y="11.3" width="2.6" height="3.2" fill="#fff"/><rect x="18.6" y="15.6" width="2.6" height="3.2" fill="#fff"/></svg>
<svg style="left:999px;top:204px" width="24" height="24" viewBox="0 0 24 24" fill="#0b6ee0" stroke="none"><path d="M12 0L14.5 3.5L18.5 2L19 6.2L23.5 7.5L21 11L23.5 15L19 16.2L18.5 21L14.5 19.3L12 23.5L9.5 19.3L5.5 21L5 16.2L0.5 15L3 11L0.5 7.5L5 6.2L5.5 2L9.5 3.5Z"/><circle cx="12" cy="11.8" r="4.5" fill="#ececec"/></svg>
<svg style="left:999px;top:243px" width="24" height="24" viewBox="0 0 24 24" fill="#0b6ee0" stroke="none"><rect x="1" y="5.8" width="4.6" height="9" fill="none" stroke="#0b6ee0" stroke-width="2"/><path d="M8.8 13V6.8H15V1.5L20 6.5" fill="none" stroke="#0b6ee0" stroke-width="2"/><path d="M5.5 17.5L10 14.2L13.8 19L21.5 5.5L24 8.5L14.5 23.8Z"/></svg>
<svg style="left:999px;top:271px" width="24" height="24" viewBox="0 0 24 24" fill="#0b6ee0" stroke="none"><path d="M0 2C0 0.9 0.9 0 2 0H19.5L24 4.5V22C24 23.1 23.1 24 22 24H2C0.9 24 0 23.1 0 22Z"/><rect x="4.6" y="1.3" width="13.5" height="7.2" fill="#fff"/><rect x="13.4" y="2.2" width="3.4" height="5.6"/><rect x="3.3" y="11.5" width="18.5" height="11" fill="#fff"/><path d="M7 18.5L10.8 16.5L13.8 20.5L21.5 9L24 10.5L14 24L7 19Z" fill="#0b6ee0" stroke="#111" stroke-width="1"/></svg>
<svg style="left:999px;top:300px" width="24" height="25" viewBox="0 0 24 25" fill="#0b6ee0" stroke="none"><circle cx="12" cy="12.5" r="11.8"/><circle cx="12" cy="12.5" r="10.2" fill="#ececec"/><circle cx="12" cy="12.5" r="9"/><path d="M8.3 8.8L15.7 16.2M15.7 8.8L8.3 16.2" stroke="#fff" stroke-width="2.6"/><path d="M5.5 17.5L9.5 15.5L13 20L21.5 7.5L24.5 9L13.5 25L5.5 18Z" fill="#0b6ee0" stroke="#111" stroke-width="1"/></svg>
<svg style="left:999px;top:331px" width="24" height="25" viewBox="0 0 24 25" fill="#0b6ee0" stroke="none"><path d="M16 0.2L24 8.8L15.5 17.7L7.2 9.7Z"/><path d="M16 2.8L21.5 8.5L17.5 12.5L16.5 9.5L15 11L14 8L12.5 9L12 6.8Z" fill="#fff"/><path d="M9.2 9L15.8 15.6" stroke="#fff" stroke-width="1.5"/><path d="M7.5 10.5L14.5 17C12.5 18.5 10.5 19 9 20.5L5.5 24C4 25 1.8 25 0.8 24C-0.2 23 0 21 1 19.5L4.5 16C6 14.5 6.5 12.5 7.5 10.5Z"/><circle cx="3.3" cy="21.5" r="1.3" fill="#fff"/></svg>
<svg style="left:999px;top:369px" width="24" height="22" viewBox="0 0 24 22" fill="#0b6ee0" stroke="none"><rect x="0" y="0" width="16.5" height="17"/><rect x="7" y="5" width="17" height="17"/><rect x="1.6" y="1.6" width="6" height="3" fill="#fff"/><rect x="8.8" y="1.6" width="6" height="3" fill="#fff"/><rect x="1.6" y="7" width="6" height="3" fill="#fff"/><rect x="1.6" y="12" width="6" height="3" fill="#fff"/><rect x="16.4" y="7" width="6" height="3" fill="#fff"/><rect x="16.4" y="12" width="6" height="3" fill="#fff"/><rect x="8.8" y="17" width="6" height="3" fill="#fff"/><rect x="16.4" y="17" width="6" height="3" fill="#fff"/><rect x="8.8" y="10.5" width="6" height="1.5" fill="#8db8f0"/></svg>
<svg style="left:999px;top:397px" width="24" height="25" viewBox="0 0 24 25" fill="#0b6ee0" stroke="none"><rect x="0" y="0" width="24" height="24.5"/><rect x="1.8" y="1.8" width="3.3" height="3" fill="#fff"/><rect x="1.8" y="6.6" width="3.3" height="3" fill="#fff"/><rect x="7.3999999999999995" y="1.8" width="3.3" height="3" fill="#fff"/><rect x="7.3999999999999995" y="6.6" width="3.3" height="3" fill="#fff"/><rect x="13.0" y="1.8" width="3.3" height="3" fill="#fff"/><rect x="13.0" y="6.6" width="3.3" height="3" fill="#fff"/><rect x="18.599999999999998" y="1.8" width="3.3" height="3" fill="#fff"/><rect x="18.599999999999998" y="6.6" width="3.3" height="3" fill="#fff"/><rect x="1.5" y="17.5" width="3" height="5" fill="#fff"/><rect x="19.5" y="17.5" width="3" height="5" fill="#fff"/><path d="M1.5 16C4.5 11 8 9.5 12 9.5C16 9.5 19.5 11 22.5 16C19.5 21 16 22.5 12 22.5C8 22.5 4.5 21 1.5 16Z" fill="#0b6ee0" stroke="#fff" stroke-width="1.4"/><path d="M6 16.5C7 19 9.5 20.5 12 20.5C14.5 20.5 17 19 18 16.5" fill="none" stroke="#fff" stroke-width="1.1"/><circle cx="12" cy="15" r="3.8"/></svg>
<svg style="left:1000px;top:435px" width="22" height="24" viewBox="0 0 22 24" fill="#0b6ee0" stroke="none"><ellipse cx="10.7" cy="6.5" rx="5.5" ry="6.5"/><path d="M8 12H13.5V15H8Z"/><ellipse cx="10.5" cy="19.2" rx="10.4" ry="4.8"/></svg>
<svg style="left:1000px;top:465px" width="21" height="25" viewBox="0 0 21 25" fill="#0b6ee0" stroke="none"><path d="M10.5 0L21 4V11C21 17.5 16 22.5 10.5 24.5C5 22.5 0 17.5 0 11V4Z"/><circle cx="10.5" cy="9.5" r="2.8" fill="#fff"/><path d="M5 17.5C5.5 14.5 7.5 13.5 10.5 13.5C13.5 13.5 15.5 14.5 16 17.5Z" fill="#fff"/></svg>
<svg style="left:999px;top:501px" width="24" height="25" viewBox="0 0 24 25" fill="#0b6ee0" stroke="none"><rect x="5.0" y="1.9" width="4.2" height="4.2" transform="rotate(25 7.1 4.0)"/><rect x="2.6999999999999997" y="6.5" width="4.2" height="4.2" transform="rotate(25 4.8 8.6)"/><rect x="0.3999999999999999" y="10.9" width="4.2" height="4.2" transform="rotate(25 2.5 13)"/><rect x="7.5" y="8.5" width="4.2" height="4.2" transform="rotate(25 9.6 10.6)"/><rect x="12.6" y="2.1" width="3.8" height="3.8" transform="rotate(25 14.5 4.0)"/><rect x="19.1" y="4.6" width="3.8" height="3.8" transform="rotate(25 21 6.5)"/><rect x="14.899999999999999" y="9.5" width="2.6" height="2.6" transform="rotate(25 16.2 10.8)"/><rect x="5.3999999999999995" y="13.0" width="2.4" height="2.4" transform="rotate(25 6.6 14.2)"/><path d="M2.3 17.3H8.4V15L13 19.8L8.4 24.6V22.3H2.3Z"/><path d="M13.2 13.9H18.9V11.3L23.8 16.2L18.9 21.1V18.1H13.2Z"/></svg>
<svg style="left:999px;top:531px" width="24" height="25" viewBox="0 0 24 25" fill="#0b6ee0" stroke="none"><rect x="5.0" y="1.9" width="4.2" height="4.2" transform="rotate(25 7.1 4.0)"/><rect x="2.6999999999999997" y="6.5" width="4.2" height="4.2" transform="rotate(25 4.8 8.6)"/><rect x="0.3999999999999999" y="10.9" width="4.2" height="4.2" transform="rotate(25 2.5 13)"/><rect x="7.5" y="8.5" width="4.2" height="4.2" transform="rotate(25 9.6 10.6)"/><rect x="12.6" y="2.1" width="3.8" height="3.8" transform="rotate(25 14.5 4.0)"/><rect x="19.1" y="4.6" width="3.8" height="3.8" transform="rotate(25 21 6.5)"/><rect x="14.899999999999999" y="9.5" width="2.6" height="2.6" transform="rotate(25 16.2 10.8)"/><rect x="5.3999999999999995" y="13.0" width="2.4" height="2.4" transform="rotate(25 6.6 14.2)"/><path d="M13.2 15.9H18.9V13.3L23.8 18.2L18.9 23.1V20.1H13.2Z"/></svg>
<svg style="left:999px;top:562px" width="24" height="25" viewBox="0 0 24 25" fill="#0b6ee0" stroke="none"><rect x="5.0" y="1.9" width="4.2" height="4.2" transform="rotate(25 7.1 4.0)"/><rect x="2.6999999999999997" y="6.5" width="4.2" height="4.2" transform="rotate(25 4.8 8.6)"/><rect x="0.3999999999999999" y="10.9" width="4.2" height="4.2" transform="rotate(25 2.5 13)"/><rect x="7.5" y="8.5" width="4.2" height="4.2" transform="rotate(25 9.6 10.6)"/><rect x="12.6" y="2.1" width="3.8" height="3.8" transform="rotate(25 14.5 4.0)"/><rect x="19.1" y="4.6" width="3.8" height="3.8" transform="rotate(25 21 6.5)"/><rect x="14.899999999999999" y="9.5" width="2.6" height="2.6" transform="rotate(25 16.2 10.8)"/><rect x="5.3999999999999995" y="13.0" width="2.4" height="2.4" transform="rotate(25 6.6 14.2)"/><path d="M24 15.9H18.3V13.3L13.4 18.2L18.3 23.1V20.1H24Z"/></svg>
<svg style="left:1002px;top:600px" width="21" height="23" viewBox="0 0 21 23" fill="#0b6ee0" stroke="none"><path d="M1 2.2C1 1.5 1.5 1 2.2 1H10.5L16 6.5V18.8C16 19.5 15.5 20 14.8 20H2.2C1.5 20 1 19.5 1 18.8Z" fill="none" stroke="#0b6ee0" stroke-width="1.9"/><path d="M10 1V7.3H16" fill="none" stroke="#0b6ee0" stroke-width="1.9"/><rect x="4" y="10.2" width="6.5" height="1.6"/><rect x="4" y="13.7" width="4.5" height="1.6"/><circle cx="14.8" cy="16.8" r="5.6" fill="#ececec"/><circle cx="14.8" cy="16.8" r="4.8"/><path d="M14.8 14V19.6M12 16.8H17.6" stroke="#fff" stroke-width="1.6"/></svg>
<svg style="left:1002px;top:630px" width="18" height="21" viewBox="0 0 18 21" fill="#0b6ee0" stroke="none"><path d="M1 2.2C1 1.5 1.5 1 2.2 1H10.5L16 6.5V18.8C16 19.5 15.5 20 14.8 20H2.2C1.5 20 1 19.5 1 18.8Z" fill="none" stroke="#0b6ee0" stroke-width="1.9"/><path d="M10 1V7.3H16" fill="none" stroke="#0b6ee0" stroke-width="1.9"/><rect x="4" y="10.3" width="9" height="1.7"/><rect x="4" y="13.8" width="9" height="1.7"/></svg>
<svg style="left:1001px;top:666px" width="21" height="24" viewBox="0 0 21 24" fill="#0b6ee0" stroke="none"><ellipse cx="10" cy="20.2" rx="10" ry="3.8"/><ellipse cx="10" cy="18.3" rx="10" ry="3.3" fill="#ececec"/><ellipse cx="10" cy="16.6" rx="10" ry="3.6"/><ellipse cx="10" cy="14.6" rx="10" ry="3.2" fill="#ececec"/><path d="M0 4.5V8.5C0 9.3 1.2 10 3 10.5V6.3C1.2 5.8 0 5.2 0 4.5Z"/><path d="M0 10.8V13.8C0 14.6 1.2 15.3 3 15.8V12.7C1.2 12.2 0 11.6 0 10.8Z"/><path d="M4.5 5.2V15.8H15.6L12 12.2L19.8 4.4L16.6 1.2L8.8 9Z"/><circle cx="16.5" cy="12.5" r="1.1"/><path d="M7.5 3.8C8.3 3.6 9.3 3.6 10.2 3.8L8.8 5.5Z"/></svg>
<svg style="left:1007px;top:701px" width="8" height="5"><path d="M0 0H8L4 4.5Z" fill="#000"/></svg>
<div class="b" style="left:13px;top:310px;width:968px;height:302px;border:1px solid #3b90ec;background:#f9f9f9"></div>
<div class="b" style="left:14px;top:311px;width:949px;height:21px;background:#fafafa;border-bottom:1px solid #ababab"></div>
<div class="b" style="left:47px;top:311px;width:1px;height:21px;background:#b4b4b4"></div>
<div class="b" style="left:164px;top:311px;width:1px;height:21px;background:#b4b4b4"></div>
<div class="b" style="left:316px;top:311px;width:1px;height:21px;background:#b4b4b4"></div>
<div class="b" style="left:459px;top:311px;width:1px;height:21px;background:#b4b4b4"></div>
<div class="b" style="left:529px;top:311px;width:1px;height:21px;background:#b4b4b4"></div>
<div class="b" style="left:655px;top:311px;width:1px;height:21px;background:#b4b4b4"></div>
<div class="b" style="left:787px;top:311px;width:1px;height:21px;background:#b4b4b4"></div>
<div class="b" style="left:962px;top:311px;width:1px;height:21px;background:#b4b4b4"></div>
<div class="t" style="left:56.3px;top:316.34px;font-size:12px;line-height:12px;color:#111;transform:scaleX(0.923);">Type</div>
<div class="t" style="left:173.2px;top:316.34px;font-size:12px;line-height:12px;color:#111;transform:scaleX(1.009);">Modèle</div>
<div class="t" style="left:325.5px;top:316.34px;font-size:12px;line-height:12px;color:#111;transform:scaleX(1.066);">Libellé</div>
<div class="t" style="left:468px;top:316.34px;font-size:12px;line-height:12px;color:#111;transform:scaleX(0.992);">Invisible</div>
<div class="t" style="left:538.6px;top:316.34px;font-size:12px;line-height:12px;color:#111;transform:scaleX(0.987);">Affichage en liste</div>
<div class="t" style="left:664.4px;top:316.34px;font-size:12px;line-height:12px;color:#111;">Affichage en fiche</div>
<div class="t" style="left:796.3px;top:316.34px;font-size:12px;line-height:12px;color:#111;">Formule</div>
<svg style="left:299.5px;top:316.5px" width="13" height="12" viewBox="0 0 13 12"><circle cx="5" cy="5" r="3.8" fill="none" stroke="#2b7de9" stroke-width="1.5"/><path d="M7.8 7.8L11.5 11" stroke="#2b7de9" stroke-width="2" stroke-linecap="round"/></svg>
<svg style="left:443.5px;top:316.5px" width="13" height="12" viewBox="0 0 13 12"><circle cx="5" cy="5" r="3.8" fill="none" stroke="#2b7de9" stroke-width="1.5"/><path d="M7.8 7.8L11.5 11" stroke="#2b7de9" stroke-width="2" stroke-linecap="round"/></svg>
<svg style="left:639px;top:316.5px" width="13" height="12" viewBox="0 0 13 12"><circle cx="5" cy="5" r="3.8" fill="none" stroke="#2b7de9" stroke-width="1.5"/><path d="M7.8 7.8L11.5 11" stroke="#2b7de9" stroke-width="2" stroke-linecap="round"/></svg>
<svg style="left:770.5px;top:316.5px" width="13" height="12" viewBox="0 0 13 12"><circle cx="5" cy="5" r="3.8" fill="none" stroke="#2b7de9" stroke-width="1.5"/><path d="M7.8 7.8L11.5 11" stroke="#2b7de9" stroke-width="2" stroke-linecap="round"/></svg>
<svg style="left:946px;top:316.5px" width="13" height="12" viewBox="0 0 13 12"><circle cx="5" cy="5" r="3.8" fill="none" stroke="#2b7de9" stroke-width="1.5"/><path d="M7.8 7.8L11.5 11" stroke="#2b7de9" stroke-width="2" stroke-linecap="round"/></svg>
<div class="b" style="left:963px;top:311px;width:17px;height:300px;background:#fff"></div>
<div class="b" style="left:963px;top:311px;width:17px;height:16px;background:#fff;border:1px solid #c8c8c8;border-top:none"></div>
<svg style="left:968px;top:318px" width="7" height="4"><path d="M0 3.5L3.5 0L7 3.5Z" fill="#000"/></svg>
<div class="b" style="left:963px;top:326px;width:17px;height:18px;background:#fff;border:1px solid #c8c8c8"></div>
<div class="b" style="left:968px;top:331px;width:7px;height:1px;background:#000"></div>
<div class="b" style="left:968px;top:333px;width:7px;height:1px;background:#000"></div>
<div class="b" style="left:968px;top:335px;width:7px;height:1px;background:#000"></div>
<div class="b" style="left:968px;top:337px;width:7px;height:1px;background:#000"></div>
<div class="b" style="left:968px;top:339px;width:7px;height:1px;background:#000"></div>
<div class="b" style="left:963px;top:595px;width:17px;height:16px;background:#fff;border:1px solid #c8c8c8;border-bottom:none"></div>
<svg style="left:968px;top:602px" width="7" height="4"><path d="M0 0L3.5 3.5L7 0Z" fill="#000"/></svg>
<div class="b" style="left:48px;top:332px;width:116px;height:29px;background:#e0e0e0"></div>
<div class="b" style="left:165px;top:332px;width:151px;height:29px;background:#e0e0e0"></div>
<div class="b" style="left:317px;top:332px;width:142px;height:29px;background:#e0e0e0"></div>
<div class="b" style="left:460px;top:332px;width:69px;height:29px;background:#e0e0e0"></div>
<div class="b" style="left:530px;top:332px;width:125px;height:29px;background:#e0e0e0"></div>
<div class="b" style="left:656px;top:332px;width:131px;height:29px;background:#e0e0e0"></div>
<div class="b" style="left:788px;top:332px;width:174px;height:29px;background:#e0e0e0"></div>
<div class="t" style="left:33.5px;top:341.04px;font-size:12px;line-height:12px;color:#111;transform:scaleX(0.824);">1</div>
<div class="b" style="left:48px;top:362px;width:116px;height:29px;background:#007efd"></div>
<div class="b" style="left:165px;top:362px;width:151px;height:29px;background:#007efd"></div>
<div class="b" style="left:317px;top:362px;width:142px;height:29px;background:#007efd"></div>
<div class="b" style="left:460px;top:362px;width:69px;height:29px;background:#007efd"></div>
<div class="b" style="left:530px;top:362px;width:125px;height:29px;background:#007efd"></div>
<div class="b" style="left:656px;top:362px;width:131px;height:29px;background:#007efd"></div>
<div class="b" style="left:788px;top:362px;width:174px;height:29px;background:#007efd"></div>
<div class="t" style="left:33.5px;top:371.04px;font-size:12px;line-height:12px;color:#111;transform:scaleX(0.824);">2</div>
<div class="b" style="left:48px;top:392px;width:116px;height:29px;background:#e0e0e0"></div>
<div class="b" style="left:165px;top:392px;width:151px;height:29px;background:#e0e0e0"></div>
<div class="b" style="left:317px;top:392px;width:142px;height:29px;background:#e0e0e0"></div>
<div class="b" style="left:460px;top:392px;width:69px;height:29px;background:#e0e0e0"></div>
<div class="b" style="left:530px;top:392px;width:125px;height:29px;background:#e0e0e0"></div>
<div class="b" style="left:656px;top:392px;width:131px;height:29px;background:#e0e0e0"></div>
<div class="b" style="left:788px;top:392px;width:174px;height:29px;background:#e0e0e0"></div>
<div class="t" style="left:33.5px;top:401.04px;font-size:12px;line-height:12px;color:#111;transform:scaleX(0.824);">3</div>
<div class="b" style="left:48px;top:422px;width:116px;height:96px;background:#e0e0e0"></div>
<div class="b" style="left:165px;top:422px;width:151px;height:96px;background:#e0e0e0"></div>
<div class="b" style="left:317px;top:422px;width:142px;height:96px;background:#e0e0e0"></div>
<div class="b" style="left:460px;top:422px;width:69px;height:96px;background:#e0e0e0"></div>
<div class="b" style="left:530px;top:422px;width:125px;height:96px;background:#e0e0e0"></div>
<div class="b" style="left:656px;top:422px;width:131px;height:96px;background:#e0e0e0"></div>
<div class="b" style="left:788px;top:422px;width:174px;height:96px;background:#e0e0e0"></div>
<div class="t" style="left:33.5px;top:464.54px;font-size:12px;line-height:12px;color:#111;transform:scaleX(0.824);">4</div>
<div class="b" style="left:48px;top:519px;width:116px;height:29px;background:#e0e0e0"></div>
<div class="b" style="left:165px;top:519px;width:151px;height:29px;background:#e0e0e0"></div>
<div class="b" style="left:317px;top:519px;width:142px;height:29px;background:#e0e0e0"></div>
<div class="b" style="left:460px;top:519px;width:69px;height:29px;background:#e0e0e0"></div>
<div class="b" style="left:530px;top:519px;width:125px;height:29px;background:#e0e0e0"></div>
<div class="b" style="left:656px;top:519px;width:131px;height:29px;background:#e0e0e0"></div>
<div class="b" style="left:788px;top:519px;width:174px;height:29px;background:#e0e0e0"></div>
<div class="t" style="left:33.5px;top:528.04px;font-size:12px;line-height:12px;color:#111;transform:scaleX(0.824);">5</div>
<div class="b" style="left:48px;top:549px;width:116px;height:29px;background:#e0e0e0"></div>
<div class="b" style="left:165px;top:549px;width:151px;height:29px;background:#e0e0e0"></div>
<div class="b" style="left:317px;top:549px;width:142px;height:29px;background:#e0e0e0"></div>
<div class="b" style="left:460px;top:549px;width:69px;height:29px;background:#e0e0e0"></div>
<div class="b" style="left:530px;top:549px;width:125px;height:29px;background:#e0e0e0"></div>
<div class="b" style="left:656px;top:549px;width:131px;height:29px;background:#e0e0e0"></div>
<div class="b" style="left:788px;top:549px;width:174px;height:29px;background:#e0e0e0"></div>
<div class="t" style="left:33.5px;top:558.04px;font-size:12px;line-height:12px;color:#111;transform:scaleX(0.824);">6</div>
<div class="b" style="left:48px;top:579px;width:116px;height:29px;background:#e0e0e0"></div>
<div class="b" style="left:165px;top:579px;width:151px;height:29px;background:#e0e0e0"></div>
<div class="b" style="left:317px;top:579px;width:142px;height:29px;background:#e0e0e0"></div>
<div class="b" style="left:460px;top:579px;width:69px;height:29px;background:#e0e0e0"></div>
<div class="b" style="left:530px;top:579px;width:125px;height:29px;background:#e0e0e0"></div>
<div class="b" style="left:656px;top:579px;width:131px;height:29px;background:#e0e0e0"></div>
<div class="b" style="left:788px;top:579px;width:174px;height:29px;background:#e0e0e0"></div>
<div class="t" style="left:33.5px;top:588.04px;font-size:12px;line-height:12px;color:#111;transform:scaleX(0.824);">7</div>
<div class="b" style="left:48px;top:609px;width:116px;height:2px;background:#e0e0e0"></div>
<div class="b" style="left:165px;top:609px;width:151px;height:2px;background:#e0e0e0"></div>
<div class="b" style="left:317px;top:609px;width:142px;height:2px;background:#e0e0e0"></div>
<div class="b" style="left:460px;top:609px;width:69px;height:2px;background:#e0e0e0"></div>
<div class="b" style="left:530px;top:609px;width:125px;height:2px;background:#e0e0e0"></div>
<div class="b" style="left:656px;top:609px;width:131px;height:2px;background:#e0e0e0"></div>
<div class="b" style="left:788px;top:609px;width:174px;height:2px;background:#e0e0e0"></div>
<svg style="left:59px;top:340px" width="16" height="12" viewBox="0 0 16 12"><rect x="0.5" y="0.5" width="15" height="11" fill="#f4f4f4" stroke="#c8c8c8"/><text x="2" y="9" font-family="Liberation Sans" font-weight="bold" font-size="8.5" fill="#000">ab</text><path d="M12 2.5h2M13 2.5v7M12 9.5h2" stroke="#333" stroke-width="0.8"/></svg>
<div class="t" style="left:81.3px;top:340.84px;font-size:12px;line-height:12px;font-style:italic;color:#8a8a8a;transform:scaleX(0.963);">Donnée</div>
<svg style="left:177px;top:339px" width="14" height="14" viewBox="0 0 14 14"><rect x="0" y="0" width="14" height="14" rx="3.5" fill="#000"/><path d="M4.3 3.5V10.5" stroke="#fff" stroke-width="1.3"/><path d="M9.8 2.8V10.5M9.8 6.8C9.3 6.2 8.7 6 8.1 6C7 6 6.3 7 6.3 8.3C6.3 9.6 7 10.5 8.1 10.5C8.7 10.5 9.3 10.2 9.8 9.7" fill="none" stroke="#fff" stroke-width="1.2"/></svg>
<div class="t" style="left:198px;top:340.84px;font-size:12px;line-height:12px;font-style:italic;color:#8a8a8a;">Id. unique</div>
<div class="t" style="left:328px;top:340.84px;font-size:12px;line-height:12px;font-style:italic;color:#8a8a8a;">Id. unique</div>
<div class="b" style="left:487px;top:339px;width:17px;height:17px;background:#3c7de0;border-radius:3px"></div>
<svg style="left:487px;top:339px" width="17" height="17"><path d="M4.5 8.5L7.5 11.5L12.5 5.5" fill="none" stroke="#fff" stroke-width="2.2"/></svg>
<div class="t" style="left:541.4px;top:340.84px;font-size:12px;line-height:12px;font-style:italic;color:#8a8a8a;transform:scaleX(0.991);">A la demande</div>
<div class="t" style="left:667.2px;top:340.84px;font-size:12px;line-height:12px;font-style:italic;color:#8a8a8a;transform:scaleX(0.991);">Oui</div>
<svg style="left:61px;top:372px" width="13" height="8"><rect x="0.5" y="0.5" width="12" height="6.5" rx="1.5" fill="#9a9a9a"/><rect x="1.5" y="1.5" width="10" height="1.6" fill="#f0f0f0"/><rect x="1.5" y="4.2" width="10" height="1.6" fill="#e6e6e6"/></svg>
<div class="t" style="left:81.3px;top:371.04px;font-size:12px;line-height:12px;font-weight:bold;-webkit-text-stroke:0.05px currentColor;color:#fff;transform:scaleX(0.968);">Séparateur</div>
<div class="t" style="left:328px;top:371.04px;font-size:12px;line-height:12px;font-weight:bold;-webkit-text-stroke:0.05px currentColor;color:#fff;transform:scaleX(0.985);">Général</div>
<div class="b" style="left:487px;top:369px;width:17px;height:17px;background:#fff;border:1px solid #6d6d6d;border-radius:2px"></div>
<div class="t" style="left:541.4px;top:371.04px;font-size:12px;line-height:12px;font-weight:bold;-webkit-text-stroke:0.05px currentColor;color:#fff;transform:scaleX(0.922);">Toujours</div>
<div class="t" style="left:667.2px;top:371.04px;font-size:12px;line-height:12px;font-weight:bold;-webkit-text-stroke:0.05px currentColor;color:#fff;transform:scaleX(0.975);">Oui</div>
<svg style="left:59px;top:400px" width="16" height="12" viewBox="0 0 16 12"><rect x="0.5" y="0.5" width="15" height="11" fill="#f4f4f4" stroke="#c8c8c8"/><text x="2" y="9" font-family="Liberation Sans" font-weight="bold" font-size="8.5" fill="#000">ab</text><path d="M12 2.5h2M13 2.5v7M12 9.5h2" stroke="#333" stroke-width="0.8"/></svg>
<div class="t" style="left:81.3px;top:401.04px;font-size:12px;line-height:12px;color:#111;transform:scaleX(0.975);">Donnée</div>
<svg style="left:177px;top:398px" width="14" height="16" viewBox="0 0 14 16"><path d="M1 1H8.5L13 5.5V15H1Z" fill="none" stroke="#000" stroke-width="1.6"/><path d="M8 0.5L13.5 6H8Z" fill="#000"/></svg>
<div class="t" style="left:198px;top:401.04px;font-size:12px;line-height:12px;color:#111;transform:scaleX(1.020);">Photo</div>
<div class="t" style="left:328px;top:401.04px;font-size:12px;line-height:12px;color:#111;transform:scaleX(1.020);">Photo</div>
<div class="b" style="left:487px;top:399px;width:17px;height:17px;background:#fff;border:1px solid #6d6d6d;border-radius:2px"></div>
<div class="t" style="left:541.4px;top:401.04px;font-size:12px;line-height:12px;color:#111;transform:scaleX(1.025);">Toujours</div>
<div class="t" style="left:667.2px;top:401.04px;font-size:12px;line-height:12px;color:#111;transform:scaleX(1.044);">Oui</div>
<svg style="left:59px;top:464px" width="16" height="12" viewBox="0 0 16 12"><rect x="0.5" y="0.5" width="15" height="11" fill="#f4f4f4" stroke="#c8c8c8"/><text x="2" y="9" font-family="Liberation Sans" font-weight="bold" font-size="8.5" fill="#000">ab</text><path d="M12 2.5h2M13 2.5v7M12 9.5h2" stroke="#333" stroke-width="0.8"/></svg>
<div class="t" style="left:81.3px;top:465.04px;font-size:12px;line-height:12px;font-weight:bold;-webkit-text-stroke:0.05px currentColor;color:#f67b3b;transform:scaleX(0.954);">Donnée</div>
<svg style="left:177px;top:463px" width="13" height="14" viewBox="0 0 13 14"><path d="M0.5 0.5H12.5V3H7.8V13.5H5.2V3H0.5Z" fill="#111"/></svg>
<div class="t" style="left:198px;top:465.04px;font-size:12px;line-height:12px;font-weight:bold;-webkit-text-stroke:0.05px currentColor;color:#f67b3b;transform:scaleX(0.994);">Référence libre</div>
<div class="t" style="left:328px;top:465.04px;font-size:12px;line-height:12px;font-weight:bold;-webkit-text-stroke:0.05px currentColor;color:#f67b3b;transform:scaleX(0.948);">Référence</div>
<div class="b" style="left:487px;top:462px;width:17px;height:17px;background:#fff;border:1px solid #6d6d6d;border-radius:2px"></div>
<div class="t" style="left:541.4px;top:465.04px;font-size:12px;line-height:12px;font-weight:bold;-webkit-text-stroke:0.05px currentColor;color:#f67b3b;transform:scaleX(0.922);">Toujours</div>
<div class="t" style="left:667.2px;top:465.04px;font-size:12px;line-height:12px;font-weight:bold;-webkit-text-stroke:0.05px currentColor;color:#f67b3b;transform:scaleX(0.975);">Oui</div>
<div class="t" style="left:798.8px;top:427.24px;font-size:12px;line-height:12px;font-weight:bold;-webkit-text-stroke:0.05px currentColor;color:#f67b3b;transform:scaleX(0.986);">sinonvide([&#x27;Référence&#x27; de</div>
<div class="t" style="left:798.8px;top:442.19px;font-size:12px;line-height:12px;font-weight:bold;-webkit-text-stroke:0.05px currentColor;color:#f67b3b;transform:scaleX(1.025);">&#x27;Article&#x27; &lt;11R1088MTB&gt;],</div>
<div class="t" style="left:798.8px;top:457.14px;font-size:12px;line-height:12px;font-weight:bold;-webkit-text-stroke:0.05px currentColor;color:#f67b3b;transform:scaleX(0.962);">si([&#x27;Sous famille&#x27; de</div>
<div class="t" style="left:798.8px;top:472.09px;font-size:12px;line-height:12px;font-weight:bold;-webkit-text-stroke:0.05px currentColor;color:#f67b3b;transform:scaleX(0.948);">&#x27;Article&#x27;</div>
<div class="t" style="left:798.8px;top:487.04px;font-size:12px;line-height:12px;font-weight:bold;-webkit-text-stroke:0.05px currentColor;color:#f67b3b;">&lt;119Q3V0KPL&gt;]&lt;&gt;0,</div>
<div class="t" style="left:798.8px;top:501.99px;font-size:12px;line-height:12px;font-weight:bold;-webkit-text-stroke:0.05px currentColor;color:#f67b3b;transform:scaleX(1.031);">trouvereference([&#x27;Référ...</div>
<svg style="left:59px;top:528px" width="16" height="12" viewBox="0 0 16 12"><rect x="0.5" y="0.5" width="15" height="11" fill="#f4f4f4" stroke="#c8c8c8"/><text x="2" y="9" font-family="Liberation Sans" font-weight="bold" font-size="8.5" fill="#000">ab</text><path d="M12 2.5h2M13 2.5v7M12 9.5h2" stroke="#333" stroke-width="0.8"/></svg>
<div class="t" style="left:81.3px;top:528.04px;font-size:12px;line-height:12px;font-weight:bold;-webkit-text-stroke:0.05px currentColor;color:#f67b3b;transform:scaleX(0.954);">Donnée</div>
<svg style="left:177px;top:527px" width="13" height="14" viewBox="0 0 13 14"><path d="M0.5 0.5H12.5V3H7.8V13.5H5.2V3H0.5Z" fill="#111"/></svg>
<div class="t" style="left:198px;top:528.04px;font-size:12px;line-height:12px;font-weight:bold;-webkit-text-stroke:0.05px currentColor;color:#f67b3b;transform:scaleX(0.931);">Libellé</div>
<div class="t" style="left:328px;top:528.04px;font-size:12px;line-height:12px;font-weight:bold;-webkit-text-stroke:0.05px currentColor;color:#f67b3b;transform:scaleX(0.949);">Désignation</div>
<div class="b" style="left:487px;top:526px;width:17px;height:17px;background:#fff;border:1px solid #6d6d6d;border-radius:2px"></div>
<div class="t" style="left:541.4px;top:528.04px;font-size:12px;line-height:12px;font-weight:bold;-webkit-text-stroke:0.05px currentColor;color:#f67b3b;transform:scaleX(0.922);">Toujours</div>
<div class="t" style="left:667.2px;top:528.04px;font-size:12px;line-height:12px;font-weight:bold;-webkit-text-stroke:0.05px currentColor;color:#f67b3b;transform:scaleX(0.975);">Oui</div>
<svg style="left:59px;top:558px" width="16" height="12" viewBox="0 0 16 12"><rect x="0.5" y="0.5" width="15" height="11" fill="#f4f4f4" stroke="#c8c8c8"/><text x="2" y="9" font-family="Liberation Sans" font-weight="bold" font-size="8.5" fill="#000">ab</text><path d="M12 2.5h2M13 2.5v7M12 9.5h2" stroke="#333" stroke-width="0.8"/></svg>
<div class="t" style="left:81.3px;top:558.04px;font-size:12px;line-height:12px;font-style:italic;color:#111;transform:scaleX(0.963);">Donnée</div>
<svg style="left:177px;top:557px" width="13" height="14" viewBox="0 0 13 14"><path d="M0.5 0.5H12.5V3H7.8V13.5H5.2V3H0.5Z" fill="#111"/></svg>
<div class="t" style="left:198px;top:558.04px;font-size:12px;line-height:12px;font-style:italic;color:#111;transform:scaleX(0.920);">Texte</div>
<div class="t" style="left:328px;top:558.04px;font-size:12px;line-height:12px;font-style:italic;color:#111;">Désignation anglaise</div>
<div class="b" style="left:487px;top:556px;width:17px;height:17px;background:#fff;border:1px solid #6d6d6d;border-radius:2px"></div>
<div class="t" style="left:541.4px;top:558.04px;font-size:12px;line-height:12px;font-style:italic;color:#111;transform:scaleX(0.991);">A la demande</div>
<div class="t" style="left:667.2px;top:558.04px;font-size:12px;line-height:12px;font-style:italic;color:#111;transform:scaleX(0.991);">Oui</div>
<div class="t" style="left:798.8px;top:558.04px;font-size:12px;line-height:12px;font-style:italic;color:#111;">[&#x27;Désignation&#x27; de &#x27;Article&#x27; ...</div>
<svg style="left:59px;top:588px" width="16" height="12" viewBox="0 0 16 12"><rect x="0.5" y="0.5" width="15" height="11" fill="#f4f4f4" stroke="#c8c8c8"/><text x="2" y="9" font-family="Liberation Sans" font-weight="bold" font-size="8.5" fill="#000">ab</text><path d="M12 2.5h2M13 2.5v7M12 9.5h2" stroke="#333" stroke-width="0.8"/></svg>
<div class="t" style="left:81.3px;top:588.04px;font-size:12px;line-height:12px;font-weight:bold;-webkit-text-stroke:0.05px currentColor;color:#111;transform:scaleX(0.954);">Donnée</div>
<svg style="left:178px;top:587px" width="12" height="11" viewBox="0 0 12 11"><path d="M5 2H1V10H9V6" fill="none" stroke="#111" stroke-width="1.4"/><path d="M5 6L10.5 0.5M7 0.7H11.3V5" fill="none" stroke="#111" stroke-width="1.4"/></svg>
<div class="t" style="left:198px;top:588.04px;font-size:12px;line-height:12px;font-weight:bold;-webkit-text-stroke:0.05px currentColor;color:#111;transform:scaleX(0.984);">Type d&#x27;article</div>
<div class="t" style="left:328px;top:588.04px;font-size:12px;line-height:12px;font-weight:bold;-webkit-text-stroke:0.05px currentColor;color:#111;transform:scaleX(0.984);">Type d&#x27;article</div>
<div class="b" style="left:487px;top:586px;width:17px;height:17px;background:#fff;border:1px solid #6d6d6d;border-radius:2px"></div>
<div class="t" style="left:541.4px;top:588.04px;font-size:12px;line-height:12px;font-weight:bold;-webkit-text-stroke:0.05px currentColor;color:#111;transform:scaleX(0.922);">Toujours</div>
<div class="t" style="left:667.2px;top:588.04px;font-size:12px;line-height:12px;font-weight:bold;-webkit-text-stroke:0.05px currentColor;color:#111;transform:scaleX(0.975);">Oui</div>
<svg style="left:10px;top:8px" width="12" height="15" viewBox="0 0 12 15"><path d="M11.5 1.2C10.3 0.5 8.7 0 7 0C3.5 0 1.2 1.8 1.2 4.5C1.2 6.8 3 7.8 5 8.5C6.5 9 7.2 9.3 7.2 10C7.2 10.8 6.3 11.2 5.2 11.2C3.6 11.2 2 10.5 0.8 9.5L0 13.5C1.3 14.4 3.2 15 5.2 15C8.8 15 11.3 13.2 11.3 10.2C11.3 7.8 9.5 6.8 7.5 6.1C6 5.6 5.3 5.3 5.3 4.6C5.3 3.9 6 3.6 7 3.6C8.3 3.6 9.6 4.1 10.6 4.8Z" fill="#1a6fc4"/></svg>
<svg style="left:918px;top:34px" width="16" height="16" viewBox="0 0 20 20"><path d="M1.3 2.9L9.5 10.2" stroke="#111" stroke-width="2" stroke-linecap="round"/><path d="M10.5 11L16.3 17.2" stroke="#111" stroke-width="4.2" stroke-linecap="round"/><path d="M2.4 17.3L10 10" stroke="#111" stroke-width="4" stroke-linecap="round"/><path d="M8.5 9.5L11.5 7.5" stroke="#111" stroke-width="3"/><circle cx="14.6" cy="5" r="4.8" fill="#111"/><circle cx="16.4" cy="3.2" r="2.4" fill="#f3f3f3"/><path d="M16.4 3.2L20 -0.5L21 4Z" fill="#f3f3f3"/></svg>
<svg style="left:939px;top:35px" width="17" height="14" viewBox="0 0 17 14"><path d="M0 7H16.5" stroke="#111" stroke-width="2"/><circle cx="8" cy="7" r="4" fill="#111"/><path d="M10 1.5C12.5 2 14 4.5 14 7C14 9.5 12.5 12 10 12.5" fill="none" stroke="#111" stroke-width="1.5"/></svg>
<svg style="left:958px;top:34px" width="16" height="16" viewBox="0 0 16 16"><path d="M9.5 6.5L2 14" stroke="#111" stroke-width="3" stroke-linecap="round"/><path d="M8.5 7.5C7.5 5 8.5 2 11.5 1L13 0.8L11 3.5L12.5 5L15.5 3C15.5 6 13 8.5 10 8Z" fill="#111"/><circle cx="2.5" cy="13.5" r="0.7" fill="#fff"/></svg>
<svg style="left:975px;top:34px" width="17" height="16" viewBox="0 0 17 16"><path d="M4 1H15.5V12.5" fill="none" stroke="#111" stroke-width="1.4"/><path d="M8 4.5H13.5M9 7H13.5M9 9.5H13.5" stroke="#111" stroke-width="1.1"/><path d="M3.5 11V15H15.5V12.5H5" fill="none" stroke="#111" stroke-width="1.4"/><path d="M3.5 9V11" stroke="#111" stroke-width="1.4"/><path d="M5 0.5L6 2L7.8 1.6L7.8 3.5L9.5 4.3L8.3 5.7L9.3 7.3L7.5 7.6L7.2 9.4L5.5 8.6L4 9.8L3.2 8.1L1.4 8.1L1.9 6.3L0.5 5.1L2.1 4.1L1.8 2.3L3.6 2.4Z" fill="#111"/><circle cx="5" cy="5.2" r="1.3" fill="#fff"/></svg>
<svg style="left:992px;top:36px" width="17" height="14" viewBox="0 0 17 14"><rect x="0.8" y="3.5" width="3" height="6" fill="none" stroke="#111" stroke-width="1.4"/><path d="M5 4.5H10V1L16 6.5L12 10" fill="none" stroke="#111" stroke-width="1.4"/><path d="M3.5 9.5L7 13L14 5" fill="none" stroke="#111" stroke-width="2.8"/></svg>
<svg style="left:1011px;top:34px" width="17" height="17" viewBox="0 0 17 17"><defs><linearGradient id="sg" x1="0" y1="0" x2="0.3" y2="1"><stop offset="0" stop-color="#0b5fc8"/><stop offset="0.55" stop-color="#1d7fe0"/><stop offset="1" stop-color="#4bb0f2"/></linearGradient></defs><path d="M16 2.2C14.5 1 12.5 0.5 10.5 0.5C6 0.5 2.5 2.5 2.5 6C2.5 8.8 5 9.8 8 10.5C9.5 10.9 10 11.3 10 11.9C10 12.7 9 13.1 7.5 13.1C5.2 13.1 3 12.3 1.3 10.8L0.5 15.2C2.3 16 4.8 16.5 7.5 16.5C12.3 16.5 15.5 14.3 15.5 10.8C15.5 8 13 6.8 10.2 6.1C8.8 5.8 8.1 5.5 8.1 4.8C8.1 4.1 8.9 3.8 10.2 3.8C12 3.8 13.8 4.4 15.2 5.4Z" fill="url(#sg)"/></svg>
<svg style="left:366px;top:228px" width="16" height="10" viewBox="0 0 16 10"><path d="M0.5 5C2.5 1.8 5 0.5 8 0.5C11 0.5 13.5 1.8 15.5 5C13.5 8.2 11 9.5 8 9.5C5 9.5 2.5 8.2 0.5 5Z" fill="#1d74e8"/><path d="M2.5 5C4 3 6 2 8 2C10 2 12 3 13.5 5C12 7 10 8 8 8C6 8 4 7 2.5 5Z" fill="#fff"/><circle cx="8" cy="5" r="3" fill="#1d74e8"/><rect x="7.2" y="3" width="1.6" height="2.5" fill="#fff"/></svg>
<div class="b" style="left:13px;top:612px;width:349px;height:25px;background:#c4c4c4;border-radius:0 0 3px 3px;border-bottom:1px solid #b5b5b5"></div>
<div class="b" style="left:98px;top:612px;width:1px;height:24px;background:#b6b6b6"></div>
<div class="b" style="left:185px;top:612px;width:90px;height:24px;background:#fff"></div>
<svg style="left:23px;top:618px" width="16" height="11" viewBox="0 0 16 11"><path d="M0.5 5.5C2.5 2 5 0.5 8 0.5C11 0.5 13.5 2 15.5 5.5C13.5 9 11 10.5 8 10.5C5 10.5 2.5 9 0.5 5.5Z" fill="#9f9f9f"/><circle cx="8" cy="5.5" r="3.4" fill="#8c8c8c"/><path d="M2 5.3C3.5 3.2 5.5 2 8 2C10.5 2 12.5 3.2 14 5.3" fill="none" stroke="#bdbdbd" stroke-width="0.8"/></svg>
<div class="t" style="left:42.5px;top:620.29px;font-size:11px;line-height:11px;color:#111;transform:scaleX(0.966);">Consulter</div>
<svg style="left:107px;top:616px" width="14" height="17" viewBox="0 0 14 17"><path d="M3 6.5V1H11V6.5" fill="none" stroke="#b0b0b0" stroke-width="1.1"/><rect x="0.5" y="6.5" width="13" height="5" fill="#a3a3a3"/><path d="M2.5 11.5V16H11.5V11.5" fill="none" stroke="#b0b0b0" stroke-width="1.1"/></svg>
<div class="t" style="left:125.3px;top:620.29px;font-size:11px;line-height:11px;color:#111;transform:scaleX(0.961);">Imprimer</div>
<svg style="left:173px;top:621px" width="10" height="7" viewBox="0 0 10 7"><path d="M0.8 0.8H9.2L5 5.8Z" fill="#fff" stroke="#000" stroke-width="0.9" stroke-linejoin="miter"/></svg>
<svg style="left:191px;top:616px" width="14" height="16" viewBox="0 0 14 16"><ellipse cx="6.5" cy="13" rx="6" ry="2.5" fill="#1d6fe0"/><path d="M0.5 6V12C0.5 13 3 14 6.5 14C10 14 12.5 13 12.5 12V6C12.5 7 10 8 6.5 8C3 8 0.5 7 0.5 6Z" fill="#1d6fe0"/><path d="M0.5 9.5C0.5 10.5 3 11.5 6.5 11.5C10 11.5 12.5 10.5 12.5 9.5" fill="none" stroke="#fff" stroke-width="0.9"/><ellipse cx="6.5" cy="5.5" rx="6" ry="2.5" fill="#1d6fe0"/><path d="M3 7.5L11 1M7 0.8H11.8V5" fill="none" stroke="#fff" stroke-width="2.5"/><path d="M3 7.5L11 1M7 0.8H11.8V5" fill="none" stroke="#1d6fe0" stroke-width="1.4"/></svg>
<div class="t" style="left:208.2px;top:620.29px;font-size:11px;line-height:11px;color:#111;transform:scaleX(1.069);">Exporter...</div>
<svg style="left:298px;top:615px" width="12" height="18" viewBox="0 0 12 18"><path d="M6 0.8C3 0.8 0.8 3 0.8 6C0.8 8.5 2.5 9.5 3.5 11.5V14H8.5V11.5C9.5 9.5 11.2 8.5 11.2 6C11.2 3 9 0.8 6 0.8Z" fill="none" stroke="#a8a8a8" stroke-width="1.2"/><path d="M4 15.5H8M4.5 17H7.5" stroke="#a8a8a8" stroke-width="1"/></svg>
<div class="t" style="left:315.6px;top:620.29px;font-size:11px;line-height:11px;color:#111;">Audit</div>
<div class="b" style="left:13px;top:643px;width:80px;height:26px;background:#fff;border:1px solid #2c7fe6;border-radius:3px"></div>
<div class="t" style="left:19.4px;top:652.29px;font-size:11px;line-height:11px;color:#1c6fdc;transform:scaleX(0.981);">Créer donnée</div>
<div class="b" style="left:7px;top:676px;width:84px;height:33px;background:#0070e4;border-radius:3px"></div>
<svg style="left:39px;top:682px" width="20" height="20" viewBox="0 0 20 20"><path d="M1.3 2.9L9.5 10.2" stroke="#fff" stroke-width="1.5" stroke-linecap="round"/><path d="M10.5 11L16.3 17.2" stroke="#fff" stroke-width="3.8" stroke-linecap="round"/><path d="M2.4 17.3L10 10" stroke="#fff" stroke-width="3.8" stroke-linecap="round"/><path d="M8.5 9.5L11.5 7.5" stroke="#fff" stroke-width="3"/><circle cx="14.6" cy="5" r="4.6" fill="#fff"/><circle cx="16.3" cy="3.3" r="2.3" fill="#0070e4"/><path d="M16.3 3.3L20 0L21 4Z" fill="#0070e4"/><path d="M9 11.2L11.2 9" stroke="#0070e4" stroke-width="0.6"/></svg>
<div class="b" style="left:99px;top:676px;width:84px;height:33px;background:#0070e4;border-radius:3px"></div>
<svg style="left:119px;top:681px" width="14" height="21" viewBox="0 0 14 21"><path d="M7 1C3.5 1 1 3.5 1 7C1 10 3 11 4 13.5V16H10V13.5C11 11 13 10 13 7C13 3.5 10.5 1 7 1Z" fill="none" stroke="#fff" stroke-width="1.4"/><circle cx="7" cy="7" r="2.3" fill="none" stroke="#fff" stroke-width="1"/><path d="M7 3.5V4.5M7 9.5V10.5M3.5 7H4.5M9.5 7H10.5M4.5 4.5L5.2 5.2M8.8 8.8L9.5 9.5M9.5 4.5L8.8 5.2M4.5 9.5L5.2 8.8" stroke="#fff" stroke-width="0.8"/><path d="M4.5 17.5H9.5M5 19.5H9" stroke="#fff" stroke-width="1.3"/></svg>
<div class="t" style="left:139.8px;top:688.29px;font-size:11px;line-height:11px;color:#fff;transform:scaleX(1.005);">Audit</div>
<div class="b" style="left:903px;top:676px;width:84px;height:33px;background:#0070e4;border-radius:3px"></div>
<svg style="left:916px;top:682px" width="20" height="20" viewBox="0 0 20 20"><circle cx="10" cy="10" r="9.4" fill="none" stroke="#fff" stroke-width="1"/><circle cx="10" cy="10" r="7.5" fill="#fff"/><path d="M7 7L13 13M13 7L7 13" stroke="#0070e4" stroke-width="2.2"/></svg>
<div class="t" style="left:939.9px;top:688.29px;font-size:11px;line-height:11px;color:#fff;transform:scaleX(0.931);">Fermer</div>
<div class="b" style="left:0;top:0;width:1030px;height:1px;background:#0274d4"></div>
<div class="b" style="left:1029px;top:0;width:1px;height:711px;background:#0274d4"></div>
<div class="b" style="left:0;top:710px;width:1030px;height:1px;background:#0274d4"></div>
</body></html>
